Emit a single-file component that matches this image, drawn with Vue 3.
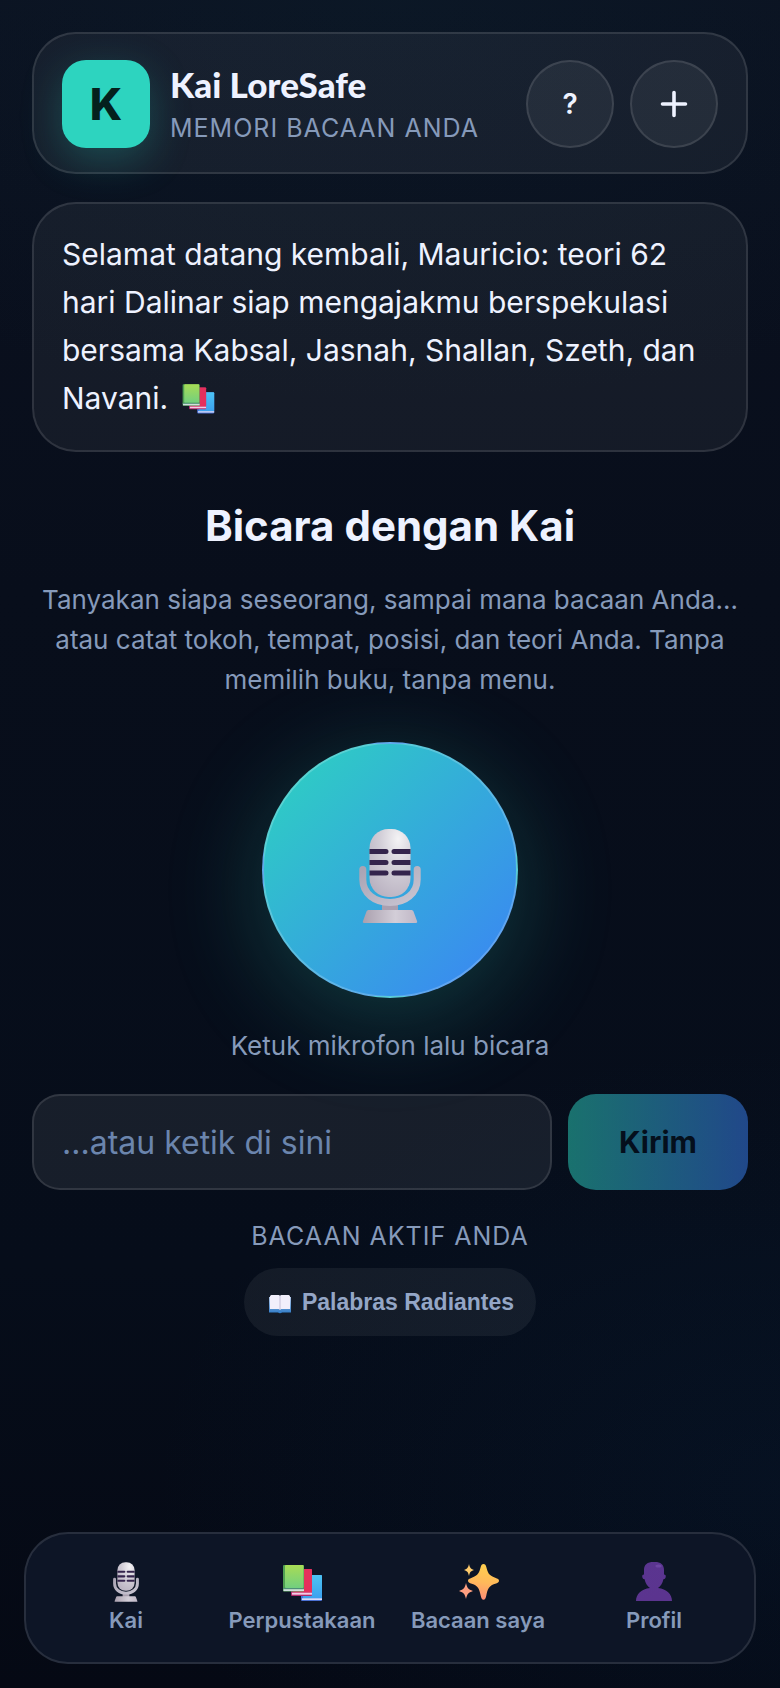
<template>
  <div class="page">
    <header class="topbar card">
      <div class="logo">K</div>
      <div class="brand">
        <h1>Kai LoreSafe</h1>
        <p class="overline">Memori bacaan Anda</p>
      </div>
      <div class="actions">
        <button type="button" class="round-btn" aria-label="Bantuan">?</button>
        <button type="button" class="round-btn" aria-label="Tambah">
          <svg width="28" height="28" viewBox="0 0 28 28" aria-hidden="true">
            <path d="M14 2.5v23M2.5 14h23" stroke="currentColor" stroke-width="3.6" stroke-linecap="round" />
          </svg>
        </button>
      </div>
    </header>

    <main>
      <section class="welcome card">
        Selamat datang kembali, Mauricio: teori 62 hari Dalinar siap mengajakmu berspekulasi
        bersama Kabsal, Jasnah, Shallan, Szeth, dan Navani.
        <svg class="inline-icon" viewBox="0 0 42 42" aria-hidden="true"><use href="#icon-books" /></svg>
      </section>

      <section class="talk">
        <h2>Bicara dengan Kai</h2>
        <p class="hint">
          Tanyakan siapa seseorang, sampai mana bacaan Anda… atau catat tokoh, tempat, posisi, dan
          teori Anda. Tanpa memilih buku, tanpa menu.
        </p>
        <button type="button" class="mic-btn" aria-label="Mikrofon">
          <svg viewBox="0 0 100 100" aria-hidden="true"><use href="#icon-mic" /></svg>
        </button>
        <p class="caption">Ketuk mikrofon lalu bicara</p>
      </section>

      <form class="composer" @submit.prevent="send">
        <input v-model="message" type="text" placeholder="...atau ketik di sini" aria-label="Pesan" />
        <button type="submit" class="send-btn" :disabled="!message.trim()">Kirim</button>
      </form>

      <section class="reading">
        <p class="overline">Bacaan aktif Anda</p>
        <button type="button" class="chip">
          <svg viewBox="0 0 24 20" aria-hidden="true"><use href="#icon-open-book" /></svg>
          Palabras Radiantes
        </button>
      </section>
    </main>

    <nav class="tabbar card">
      <a v-for="tab in tabs" :key="tab.label" href="#">
        <svg :viewBox="tab.box" aria-hidden="true"><use :href="tab.icon" /></svg>
        <span>{{ tab.label }}</span>
      </a>
    </nav>

    <!-- Shared icon shapes -->
    <svg class="sprite" width="0" height="0" aria-hidden="true">
      <defs>
        <radialGradient id="mic-head" cx="0.7" cy="0.15" r="0.95">
          <stop offset="0" stop-color="#f4f3f5" />
          <stop offset="0.45" stop-color="#d3cfd8" />
          <stop offset="1" stop-color="#b9b1c0" />
        </radialGradient>
        <linearGradient id="mic-arm" x1="0" y1="0" x2="1" y2="1">
          <stop offset="0" stop-color="#aaa4b4" />
          <stop offset="1" stop-color="#c9c5d2" />
        </linearGradient>
        <linearGradient id="mic-base" x1="0" y1="0" x2="1" y2="0">
          <stop offset="0" stop-color="#aaa0ae" />
          <stop offset="0.6" stop-color="#d3ced8" />
          <stop offset="1" stop-color="#c0b7c6" />
        </linearGradient>
        <linearGradient id="book-green" x1="0" y1="0" x2="0" y2="1">
          <stop offset="0" stop-color="#a8dc55" />
          <stop offset="1" stop-color="#72cf7f" />
        </linearGradient>
        <linearGradient id="book-blue" x1="0" y1="0" x2="0" y2="1">
          <stop offset="0" stop-color="#4cc3f4" />
          <stop offset="1" stop-color="#3ba1ee" />
        </linearGradient>
        <linearGradient id="spark" x1="0.5" y1="0" x2="0.35" y2="1">
          <stop offset="0" stop-color="#ffcf4e" />
          <stop offset="0.5" stop-color="#ffb95a" />
          <stop offset="1" stop-color="#ff8c78" />
        </linearGradient>
        <linearGradient id="person" x1="0" y1="0" x2="0.3" y2="1">
          <stop offset="0" stop-color="#5a3590" />
          <stop offset="1" stop-color="#5b348f" />
        </linearGradient>
        <linearGradient id="book-edge" x1="0" y1="0" x2="0" y2="1">
          <stop offset="0" stop-color="#b4c8e8" />
          <stop offset="1" stop-color="#2f7cc8" />
        </linearGradient>
      </defs>

      <symbol id="icon-mic" viewBox="0 0 100 100">
        <rect x="42" y="77" width="16" height="9" fill="#aaa0b0" />
        <path
          d="M22.800 43.500v10c0 14 12 23 27.200 23s27.200-9 27.200-23v-10"
          fill="none"
          stroke="url(#mic-arm)"
          stroke-width="7"
          stroke-linecap="round"
        />
        <path d="M29 84h42c1.500 0 2 .5 2.500 1.500L77 95c.5 1.300 0 2-1 2H24c-1 0-1.500-.7-1-2l3.500-9.500c.5-1 1-1.500 2.500-1.500z" fill="url(#mic-base)" />
        <rect x="29.500" y="3" width="41" height="68" rx="19" fill="url(#mic-head)" />
        <path
          d="M29.500 23H46a2.500 2.500 0 0 1 0 5H29.500zM29.500 34H46a2.500 2.500 0 0 1 0 5H29.500zM29.500 44.500H46a2.500 2.500 0 0 1 0 5H29.500zM70.500 23H54a2.500 2.500 0 0 0 0 5h16.500zM70.500 34H54a2.500 2.500 0 0 0 0 5h16.500zM70.500 44.500H54a2.500 2.500 0 0 0 0 5h16.500z"
          fill="#34244c"
        />
      </symbol>

      <symbol id="icon-books" viewBox="0 0 42 42">
        <rect x="20" y="14" width="21" height="26" rx="1" fill="#4a6fd2" />
        <rect x="22" y="14" width="19" height="23.500" rx="1" fill="url(#book-blue)" />
        <rect x="21" y="37.300" width="20" height="1.700" fill="#d5dcfa" />
        <rect x="10" y="8" width="21" height="27" rx="1" fill="#b3296b" />
        <rect x="12" y="8" width="19" height="23.500" rx="1" fill="#e5305c" />
        <rect x="11" y="31.700" width="20" height="2" fill="#f4cbe4" />
        <rect x="2" y="4" width="21" height="26.500" rx="1" fill="#50a052" />
        <rect x="4" y="4" width="18.500" height="23" rx="1" fill="url(#book-green)" />
        <rect x="2" y="27" width="21" height="1.200" fill="#4f8f78" />
        <rect x="2.500" y="28.200" width="20.500" height="1.900" fill="#cfe0dd" />
      </symbol>

      <symbol id="icon-sparkles" viewBox="0 0 42 42">
        <path
          d="M26.500 3c1.600 0 2.300 1.200 2.800 3 1.600 5.800 2.200 8.400 8.900 10.700 2.600.9 3.800 1.600 3.800 3.100s-1.300 2.200-3.800 3c-6.500 2.200-7.500 5-9 12.200-.5 2.300-1.200 3.700-2.700 3.700s-2.200-1.400-2.700-3.700c-1.500-7-2.500-10-9-12.200-2.500-.8-3.800-1.500-3.800-3s1.300-2.200 3.800-3.100c6.700-2.300 7.300-5 8.900-10.700.5-1.800 1.200-3 2.800-3z"
          fill="url(#spark)"
        />
        <path
          d="M12 3c.8 3.600 1.400 4.500 5 6-3.600 1.300-4.200 2.300-5 6-.8-3.700-1.400-4.700-5-6 3.600-1.500 4.200-2.400 5-6z"
          fill="#ffcb6b"
        />
        <path
          d="M9 22c1.200 5 2 6.300 7 8-5 1.800-5.800 3-7 8-1.200-5-2-6.200-7-8 5-1.700 5.800-3 7-8z"
          fill="#ff9f80"
        />
      </symbol>

      <symbol id="icon-person" viewBox="0 0 42 42">
        <path
          d="M20.500 1h1.500c5.500 0 9 2.500 9 8v4.500c1.600 0 2 1.300 1.700 2.500-.3 1.300-1.100 2.300-2.300 2.300-.7 4-2.900 7.200-5.400 8.700C33.500 28 39 33 39 40H3c0-7 5.500-12 14-13-2.500-1.500-4.700-4.700-5.400-8.700-1.200 0-2-1-2.300-2.300-.3-1.200.1-2.500 1.700-2.500V9c0-5.500 3.500-8 9.500-8z"
          fill="url(#person)"
        />
        <ellipse cx="25.500" cy="5" rx="3" ry="1.500" fill="#7a52b0" opacity="0.6" />
      </symbol>

      <symbol id="icon-open-book" viewBox="0 0 24 20">
        <path d="M1 3h22v15.500H14c-1 1-3 1-4 0H1z" fill="url(#book-edge)" />
        <path d="M2 2.500C2 1.500 3 1 4 1h6c1 0 1.700.4 2 1 .3-.6 1-1 2-1h6c1 0 2 .5 2 1.500V15h-8c-1 0-1.600.3-2 1-.4-.7-1-1-2-1H2z" fill="#f1effb" />
        <path d="M12 2v13.500" stroke="#c4bfd8" stroke-width="1" />
      </symbol>
    </svg>
  </div>
</template>

<script setup>
import { ref } from 'vue'

const message = ref('')

const tabs = [
  { label: 'Kai', icon: '#icon-mic', box: '0 0 100 100' },
  { label: 'Perpustakaan', icon: '#icon-books', box: '0 0 42 42' },
  { label: 'Bacaan saya', icon: '#icon-sparkles', box: '0 0 42 42' },
  { label: 'Profil', icon: '#icon-person', box: '0 0 42 42' },
]

const send = () => {
  message.value = ''
}
</script>

<style>
body {
  margin: 0;
  background: #050b18;
}
</style>

<style scoped>
.page {
  box-sizing: border-box;
  min-height: 100vh;
  padding: 32px 24px 24px;
  display: flex;
  flex-direction: column;
  font-family: Inter, 'Liberation Sans', sans-serif;
  color: #eef2ff;
  background:
    radial-gradient(ellipse 100% 24% at 50% 0%, rgba(14, 60, 72, 0.15), transparent),
    radial-gradient(ellipse 80% 26% at 100% 88%, rgba(10, 50, 90, 0.16), transparent),
    linear-gradient(180deg, #0b1120 0%, #080e1b 35%, #060d1a 75%, #050914 100%);
}

h1,
h2,
p {
  margin: 0;
}

button,
input {
  font-family: inherit;
  color: inherit;
}

button {
  cursor: pointer;
}

.card {
  border: 2px solid rgba(255, 255, 255, 0.11);
  border-radius: 44px;
  background: rgba(255, 255, 255, 0.05);
}

.topbar {
  margin: 0 8px;
  padding: 26px 28px 24px;
  display: flex;
  align-items: center;
  gap: 20px;
}

.logo {
  width: 88px;
  height: 88px;
  flex: none;
  display: flex;
  align-items: center;
  justify-content: center;
  border-radius: 24px;
  background: #2dd4bf;
  box-shadow: 0 12px 40px rgba(45, 212, 191, 0.25);
  color: #04211d;
  font-size: 44px;
  font-weight: 800;
}

.brand {
  flex: 1;
}

h1 {
  font-family: Lato, sans-serif;
  font-size: 35px;
  line-height: 48px;
  font-weight: 900;
}

.overline {
  font-size: 25px;
  line-height: 40px;
  letter-spacing: 1px;
  text-transform: uppercase;
  color: #869aba;
}

.actions {
  display: flex;
  gap: 16px;
}

.round-btn {
  box-sizing: border-box;
  width: 88px;
  height: 88px;
  padding: 0;
  display: flex;
  align-items: center;
  justify-content: center;
  border: 2px solid rgba(255, 255, 255, 0.11);
  border-radius: 50%;
  background: rgba(255, 255, 255, 0.06);
  font-size: 28px;
  font-weight: 600;
}

main {
  padding: 0 8px;
}

.welcome {
  margin-top: 28px;
  padding: 26px 28px 28px;
  font-size: 30px;
  line-height: 48px;
}

.inline-icon {
  width: 34px;
  height: 34px;
  margin-left: 4px;
  vertical-align: -6px;
}

.talk {
  margin-top: 46px;
  display: flex;
  flex-direction: column;
  align-items: center;
  text-align: center;
}

h2 {
  font-size: 42px;
  line-height: 56px;
  font-weight: 700;
}

.hint,
.caption {
  font-size: 26px;
  line-height: 40px;
  color: #869aba;
}

.hint {
  margin: 26px 0 42px;
}

.mic-btn {
  width: 256px;
  height: 256px;
  padding: 0;
  display: flex;
  align-items: center;
  justify-content: center;
  border: 2px solid rgba(255, 255, 255, 0.2);
  border-radius: 50%;
  background: linear-gradient(135deg, #2dd4bf, #3b82f6);
  box-shadow: 0 20px 100px rgba(45, 212, 191, 0.24);
}

.mic-btn svg {
  width: 100px;
  height: 100px;
  margin-top: 12px;
}

.caption {
  margin-top: 28px;
}

.composer {
  margin-top: 28px;
  display: flex;
  gap: 16px;
}

.composer input {
  box-sizing: border-box;
  min-width: 0;
  height: 96px;
  flex: 1;
  padding: 0 28px;
  border: 2px solid rgba(255, 255, 255, 0.11);
  border-radius: 28px;
  background: rgba(255, 255, 255, 0.07);
  font-size: 32px;
  outline: none;
}

.composer input::placeholder {
  color: #6b85ad;
  opacity: 1;
}

.send-btn {
  width: 180px;
  border: none;
  border-radius: 28px;
  background: linear-gradient(90deg, #2dd4bf, #3b82f6);
  color: #04111d;
  font-size: 30px;
  font-weight: 700;
}

.send-btn:disabled {
  opacity: 0.5;
}

.reading {
  margin-top: 26px;
  display: flex;
  flex-direction: column;
  align-items: center;
  gap: 12px;
}

.chip {
  height: 68px;
  padding: 0 22px 0 24px;
  display: flex;
  align-items: center;
  gap: 10px;
  border: none;
  border-radius: 34px;
  background: rgba(255, 255, 255, 0.06);
  color: #94a6c6;
  font-family: 'Liberation Sans', Arial, sans-serif;
  font-size: 23px;
  font-weight: 700;
}

.chip svg {
  width: 24px;
  height: 20px;
  margin-top: 4px;
}

.tabbar {
  margin-top: auto;
  padding: 27px 12px 25px;
  display: grid;
  grid-template-columns: repeat(4, 1fr);
  background: #0d1526;
}

.tabbar a {
  display: flex;
  flex-direction: column;
  align-items: center;
  color: #869aba;
  font-size: 22px;
  line-height: 34px;
  font-weight: 600;
  text-decoration: none;
}

.tabbar svg {
  width: 42px;
  height: 42px;
}

.sprite {
  position: absolute;
}
</style>
